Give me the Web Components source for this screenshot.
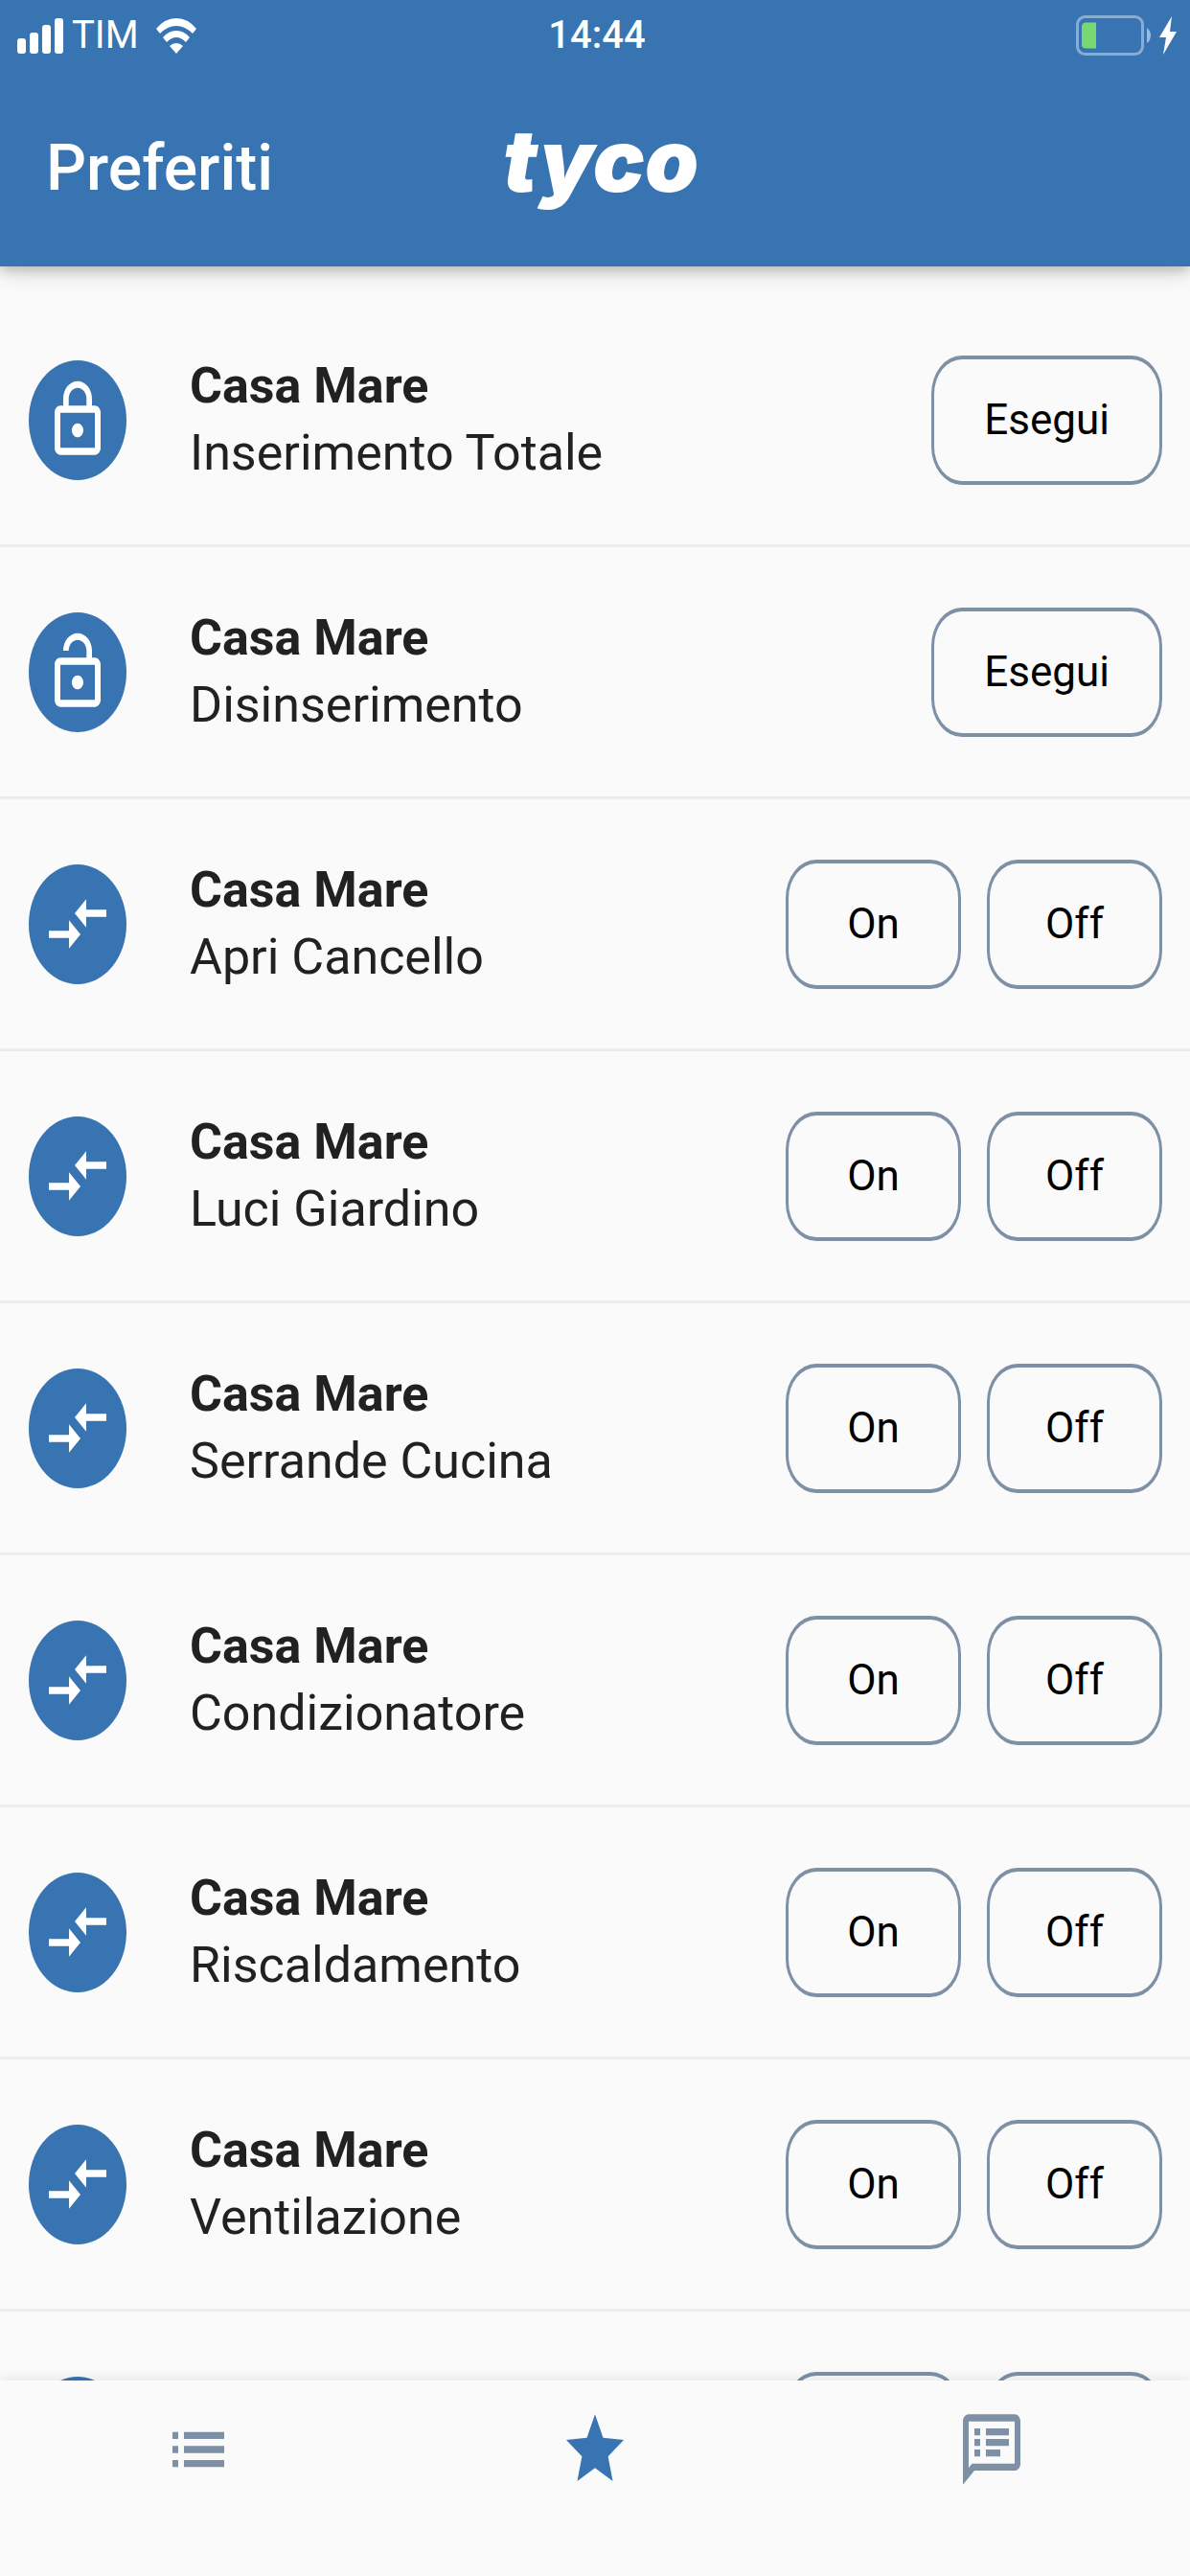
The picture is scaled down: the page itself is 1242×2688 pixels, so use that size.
<!DOCTYPE html>
<html lang="it">
<head>
<meta charset="utf-8">
<meta name="viewport" content="width=device-width, initial-scale=1">
<title>Preferiti</title>
<style>
  html, body { margin: 0; height: 100%; }
  body {
    --brand: #3774b1;
    --muted: #7e90a5;
    --surface: #fafafa;
    --ink: #212121;
    background: var(--surface);
    color: var(--ink);
    font-family: Roboto, "Liberation Sans", sans-serif;
  }
</style>
</head>
<body>
<favorites-app></favorites-app>

<script>
const ICONS = {
  lock: 'M12 17c1.1 0 2-.9 2-2s-.9-2-2-2-2 .9-2 2 .9 2 2 2zm6-9h-1V6c0-2.76-2.24-5-5-5S7 3.24 7 6v2H6c-1.1 0-2 .9-2 2v10c0 1.1.9 2 2 2h12c1.1 0 2-.9 2-2V10c0-1.1-.9-2-2-2zM8.9 6c0-1.71 1.39-3.1 3.1-3.1s3.1 1.39 3.1 3.1v2H8.9V6zM18 20H6V10h12v10z',
  unlock: 'M12 17c1.1 0 2-.9 2-2s-.9-2-2-2-2 .9-2 2 .9 2 2 2zm6-9h-1V6c0-2.76-2.24-5-5-5S7 3.24 7 6h1.9c0-1.71 1.39-3.1 3.1-3.1s3.1 1.39 3.1 3.1v2H6c-1.1 0-2 .9-2 2v10c0 1.1.9 2 2 2h12c1.1 0 2-.9 2-2V10c0-1.1-.9-2-2-2zm0 12H6V10h12v10z',
  arrows: 'M9.01 14H2v2h7.01v3L13 15l-3.99-4v3zm5.98-1v-3H22V8h-7.01V5L11 9l3.99 4z',
  list: 'M3 13h2v-2H3v2zm0 4h2v-2H3v2zm0-8h2V7H3v2zm4 4h14v-2H7v2zm0 4h14v-2H7v2zM7 7v2h14V7H7z',
  star: 'M12 17.27L18.18 21l-1.64-7.03L22 9.24l-7.19-.61L12 2 9.19 8.63 2 9.24l5.46 4.73L5.82 21z',
  notes: 'M20 2H4c-1.1 0-1.99.9-1.99 2L2 22l4-4h14c1.1 0 2-.9 2-2V4c0-1.1-.9-2-2-2zm0 14H5.17L4 17.17V4h16v12zM6 12h2v2H6zm0-3h2v2H6zm0-3h2v2H6zm4 6h5v2h-5zm0-3h8v2h-8zm0-3h8v2h-8z'
};

class Base extends HTMLElement {
  connectedCallback() {
    if (!this.shadowRoot) this.attachShadow({ mode: 'open' }).innerHTML = this.render();
  }
}

customElements.define('app-icon', class extends Base {
  render() {
    return `<style>
      :host { display: block; width: 72px; height: 88px; }
      svg { display: block; width: 100%; height: 100%; fill: currentColor; }
    </style>
    <svg viewBox="0 0 24 24" preserveAspectRatio="none" aria-hidden="true"><path d="${ICONS[this.getAttribute('name')]}"/></svg>`;
  }
});

customElements.define('status-bar', class extends Base {
  render() {
    return `<style>
      :host { display: grid; grid-template-columns: 1fr auto 1fr; align-items: center; height: 74px; padding: 0 14px 0 18px; font-size: 40px; line-height: 52px; }
      .side { display: flex; align-items: center; gap: 9px; }
      .end { justify-content: flex-end; gap: 8px; }
      .wifi { margin-left: 9px; }
      time { font-weight: 500; }
      svg { display: block; flex: none; }
    </style>
    <div class="side">
      <svg width="48" height="37" fill="#fff" aria-hidden="true">
        <rect y="21" width="9" height="16" rx="3"/><rect x="13" y="15" width="9" height="22" rx="3"/>
        <rect x="26" y="7" width="9" height="30" rx="3"/><rect x="39" width="9" height="37" rx="3"/>
      </svg>
      <span>TIM</span>
      <svg class="wifi" width="42" height="37" viewBox="0 0 42 37" fill="#fff" aria-hidden="true">
        <path d="M0 11Q9 0 21 0T42 11L38 16Q30 8 21 8T4 16Z"/>
        <path d="M7 20Q13 13 21 13T35 20L31 25Q26 20 21 20T11 25Z"/>
        <path d="M14 29Q17 26 21 26T28 29L21 37Z"/>
      </svg>
    </div>
    <time>14:44</time>
    <div class="side end">
      <svg width="79" height="42" viewBox="0 0 79 42" aria-hidden="true">
        <rect x="1.5" y="1.5" width="68" height="39" rx="8" fill="none" stroke="#87aed2" stroke-width="3"/>
        <path d="M10 7.500H21V34.500H10Q6 34.500 6 30V12Q6 7.500 10 7.500Z" fill="#78d973"/>
        <path d="M74 13Q78 16 78 21T74 29Z" fill="#9bbcda"/>
      </svg>
      <svg width="18" height="40" viewBox="0 0 18 40" fill="#fff" aria-hidden="true"><path d="M13 0L0 22H7L4 40L18 16H11Z"/></svg>
    </div>`;
  }
});

customElements.define('app-header', class extends Base {
  render() {
    return `<style>
      :host { display: block; flex: none; position: relative; z-index: 1; background: var(--brand); color: #fff; box-shadow: 0 5px 12px rgba(0,0,0,.2), 0 6px 28px rgba(0,0,0,.1); }
      .bar { display: grid; grid-template-columns: 1fr auto 1fr; align-items: center; height: 204px; padding: 0 36px 0 48px; box-sizing: border-box; }
      h1 { margin: 0; font-size: 66px; line-height: 88px; font-weight: 500; }
      .logo { padding-bottom: 16px; font: italic 900 90px/104px Inter, "Liberation Sans", sans-serif; }
    </style>
    <status-bar></status-bar>
    <div class="bar"><h1><slot></slot></h1><div class="logo">tyco</div></div>`;
  }
});

customElements.define('action-button', class extends Base {
  render() {
    return `<style>
      :host { display: block; }
      button { display: block; box-sizing: border-box; min-width: 183px; height: 135px; padding: 0 52px; border: 3px solid var(--muted); border-width: 4px 3px; border-radius: 32px / 40px; background: none; color: #000; font: inherit; font-size: 44px; line-height: 60px; }
    </style>
    <button type="button"><slot></slot></button>`;
  }
});

customElements.define('favorite-row', class extends Base {
  render() {
    return `<style>
      :host { display: flex; align-items: center; box-sizing: border-box; height: 263px; padding: 0 29px 0 30px; border-bottom: 3px solid #ececec; }
      .badge { display: flex; flex: none; align-items: center; justify-content: center; width: 102px; height: 125px; border-radius: 50%; background: var(--brand); color: #fff; }
      .text { flex: 1; min-width: 0; padding-left: 66px; font-size: 52px; line-height: 70px; }
      .site { font-weight: 700; }
      .actions { display: flex; gap: 27px; }
    </style>
    <div class="badge"><app-icon name="${this.getAttribute('icon')}"></app-icon></div>
    <div class="text"><div class="site"><slot name="site"></slot></div><div><slot></slot></div></div>
    <div class="actions"><slot name="action"></slot></div>`;
  }
});

customElements.define('tab-bar', class extends Base {
  render() {
    return `<style>
      :host { display: flex; flex: none; position: relative; z-index: 1; height: 204px; background: var(--surface); box-shadow: 0 -2px 12px rgba(0,0,0,.08); }
      button { flex: 1; display: flex; justify-content: center; align-items: flex-start; padding: 28px 0 0; border: 0; background: none; color: var(--muted); }
      button[aria-current] { color: var(--brand); }
    </style>
    <button type="button" aria-label="Elenco"><app-icon name="list"></app-icon></button>
    <button type="button" aria-label="Preferiti" aria-current="page"><app-icon name="star"></app-icon></button>
    <button type="button" aria-label="Eventi"><app-icon name="notes"></app-icon></button>`;
  }
});

const ROWS = [
  ['lock', 'Inserimento Totale', ['Esegui']],
  ['unlock', 'Disinserimento', ['Esegui']],
  ['arrows', 'Apri Cancello', ['On', 'Off']],
  ['arrows', 'Luci Giardino', ['On', 'Off']],
  ['arrows', 'Serrande Cucina', ['On', 'Off']],
  ['arrows', 'Condizionatore', ['On', 'Off']],
  ['arrows', 'Riscaldamento', ['On', 'Off']],
  ['arrows', 'Ventilazione', ['On', 'Off']],
  ['arrows', '', ['', '']]
];

customElements.define('favorites-app', class extends Base {
  render() {
    const rows = ROWS.map(([icon, name, actions]) => `<favorite-row icon="${icon}">
      ${name && `<span slot="site">Casa Mare</span>${name}`}
      ${actions.map(a => `<action-button slot="action">${a}</action-button>`).join('')}
    </favorite-row>`).join('');
    return `<style>
      :host { display: flex; flex-direction: column; height: 100vh; }
      main { flex: 1; min-height: 0; overflow: hidden; padding-top: 30px; }
    </style>
    <app-header>Preferiti</app-header>
    <main>${rows}</main>
    <tab-bar></tab-bar>`;
  }
});
</script>
</body>
</html>
